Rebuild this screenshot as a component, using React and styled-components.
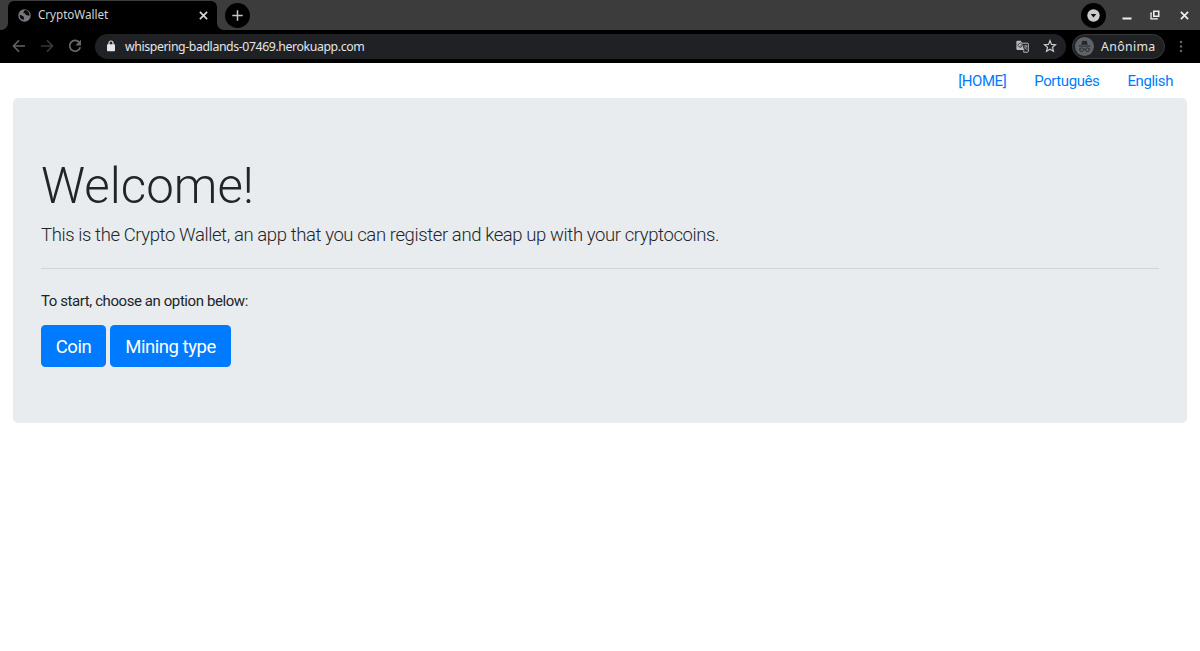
import React from "react";
import styled, { createGlobalStyle } from "styled-components";

const GlobalStyle = createGlobalStyle`
  *, *::before, *::after { box-sizing: border-box; }
  body {
    margin: 0;
    background: #fff;
    color: #212529;
    font: 400 15px/1.5 Roboto, "Liberation Sans", sans-serif;
    letter-spacing: -0.42px;
  }
`;

const Window = styled.div`
  display: flex;
  flex-direction: column;
  height: 651px;
  overflow: hidden;
`;

const TabStrip = styled.div`
  display: flex;
  align-items: stretch;
  height: 30px;
  background: #3c3c3c;
  font-family: "Noto Sans", sans-serif;
`;

const StripCorner = styled.div`
  width: 8px;
  background: #000;
  &::after {
    content: "";
    display: block;
    height: 100%;
    background: #3c3c3c;
    border-radius: ${(p) => (p.$right ? "0 0 0 7px" : "0 0 7px 0")};
  }
`;

const Tab = styled.div`
  display: flex;
  align-items: center;
  width: 209px;
  margin-top: 1px;
  padding: 0 9px 1px 10px;
  background: #000;
  border-radius: 6px 6px 0 0;
`;

const TabTitle = styled.span`
  flex: 1;
  margin-left: 7px;
  color: #d3d4d6;
  font-size: 11.7px;
  line-height: 26px;
  letter-spacing: -0.05px;
  padding-bottom: 2px;
`;

const RoundButton = styled.div`
  display: grid;
  place-items: center;
  width: 25px;
  height: 25px;
  border-radius: 50%;
  background: #000;
  align-self: center;
`;

const WindowControls = styled.div`
  display: flex;
  align-items: center;
  margin-left: auto;
  padding-right: 8px;
`;

const ControlGlyph = styled.div`
  display: grid;
  place-items: center;
  width: 16px;
  margin-left: ${(p) => p.$gap}px;
`;

const Toolbar = styled.div`
  display: flex;
  align-items: center;
  height: 33px;
  padding: 0 11px 1px 11px;
  background: #000;
  color: #e4e5e7;
  font-family: "Noto Sans", sans-serif;
`;

const NavIcons = styled.div`
  display: flex;
  gap: 12px;
  width: 84px;
`;

const AddressBar = styled.div`
  display: flex;
  align-items: center;
  flex: 1;
  height: 25px;
  padding: 0 9px 0 11px;
  border-radius: 13px;
  background: #202124;
`;

const Url = styled.span`
  flex: 1;
  margin-left: 9px;
  font-size: 12.3px;
  letter-spacing: -0.4px;
  line-height: 25px;
`;

const AddressIcons = styled.div`
  display: flex;
  align-items: center;
  gap: 14px;
`;

const Profile = styled.div`
  display: flex;
  align-items: center;
  width: 93px;
  height: 25px;
  margin: 0 8px 0 6px;
  padding-left: 2px;
  border: 1px solid #37393c;
  border-radius: 13px;
  background: #202124;
`;

const ProfileName = styled.span`
  margin-left: 7px;
  font-size: 12.3px;
  line-height: 23px;
  letter-spacing: 0.35px;
  white-space: nowrap;
`;

const Page = styled.div`
  flex: 1;
  padding: 0 13px;
`;

const SiteNav = styled.nav`
  display: flex;
  justify-content: flex-end;
  align-items: center;
  gap: 28px;
  height: 35px;
  padding: 2px 14px 0 0;
`;

const NavLink = styled.a`
  color: #007bff;
  text-decoration: none;
  line-height: 21px;
`;

const Jumbotron = styled.section`
  height: 325px;
  padding: 57px 28px 56px;
  border-radius: 5px;
  background: #e9ecef;
`;

const Heading = styled.h1`
  margin: 0 0 3px;
  font-size: 49.2px;
  font-weight: 300;
  line-height: 63px;
  letter-spacing: 0;
`;

const Lead = styled.p`
  margin: 0;
  padding-top: 1px;
  font-size: 18.5px;
  font-weight: 300;
  line-height: 26.4px;
  letter-spacing: -0.4px;
`;

const Divider = styled.hr`
  margin: 20px 0 21px;
  border: 0;
  border-top: 1px solid #d1d4d7;
`;

const Prompt = styled.p`
  margin: 0 0 12px;
  line-height: 23px;
`;

const Actions = styled.div`
  display: flex;
  gap: 4px;
`;

const Button = styled.button`
  width: ${(p) => p.$width}px;
  height: 42px;
  padding: 2px 0 0;
  border: 0;
  border-radius: 4.5px;
  background: #007bff;
  color: #fff;
  font: 400 18.5px/40px Roboto, sans-serif;
  letter-spacing: -0.45px;
`;

const Globe = () => (
  <svg width="13" height="13" viewBox="0 0 24 24">
    <circle cx="12" cy="12" r="11.5" fill="#75797d" />
    <path d="M3 11c3 0 5 1 7 3 2 1 0 3 1 6-5 0-8-4-8-9zM11 3c1 2-2 2-1 4s3 0 4 3c1 2 4 1 7 3 1-5-2-10-7-11z" fill="#0b0b0b" />
  </svg>
);

const Close = ({ size, color }) => (
  <svg width={size} height={size} viewBox="0 0 10 10" stroke={color} strokeWidth="1.9">
    <path d="M1 1l8 8M9 1L1 9" />
  </svg>
);

const Arrow = ({ forward }) => (
  <svg width="16" height="16" viewBox="0 0 16 16" fill="none" stroke={forward ? "#38393b" : "#606368"} strokeWidth="1.5">
    <path d={forward ? "M2 8h11M8 2.4L13.6 8 8 13.6" : "M14 8H3M8 2.4L2.4 8 8 13.6"} />
  </svg>
);

const Reload = () => (
  <svg width="16" height="16" viewBox="0 0 16 16">
    <path d="M12.3 4.4A5.4 5.4 0 1 0 13.3 9.3" fill="none" stroke="#66696e" strokeWidth="1.7" />
    <path d="M14 1.8v5.6H8.4z" fill="#66696e" />
  </svg>
);

const Lock = () => (
  <svg width="10" height="12" viewBox="0 0 10 12">
    <rect x="1" y="4.3" width="8" height="6.9" rx=".8" fill="#e4e5e7" />
    <path d="M3 5V3a2 2 0 0 1 4 0v2" fill="none" stroke="#e4e5e7" strokeWidth="1.2" />
  </svg>
);

const Translate = () => (
  <svg width="13" height="13" viewBox="0 0 13 13" fill="none">
    <path d="M5 3.2h6.6q.7 0 .7.7v7.6q0 .7-.7.7H7.5" stroke="#b9bbbe" />
    <path d="M1.2.7H5l3.1 9.2H1.2a.8.8 0 0 1-.8-.8V1.5q0-.8.8-.8z" fill="#b9bbbe" />
    <path d="M5.8 4.2a2 2 0 1 0 .2 1.6H4.4" stroke="#34363a" strokeWidth=".9" />
    <path d="M7.5 6H11.5M9.6 5v1M10.8 6c-.3 1.5-1.3 2.4-2.3 3.2M8.5 7l2.6 2.8M8 10l-.6 2" stroke="#b9bbbe" strokeWidth=".8" />
  </svg>
);

const Star = () => (
  <svg width="14" height="14" viewBox="0 0 24 24" fill="none" stroke="#c8cacc" strokeWidth="2.1" strokeLinejoin="miter">
    <path d="M12 2.8l2.6 6.4 6.9.6-5.2 4.5 1.6 6.8-5.9-3.6-5.9 3.6 1.6-6.8-5.2-4.5 6.9-.6z" />
  </svg>
);

const Incognito = () => (
  <svg width="19" height="19" viewBox="0 0 19 19" fill="none">
    <circle cx="9.5" cy="9.5" r="9.5" fill="#5f6368" />
    <path d="M6.2 7.8l1-3.7q.2-.5.8-.4l1.5.4 1.5-.4q.6-.1.8.4l1 3.7z" fill="#25272a" />
    <path d="M3.6 9.1h11.8" stroke="#25272a" strokeWidth="1" />
    <circle cx="6.7" cy="12.7" r="1.8" stroke="#25272a" strokeWidth=".9" />
    <circle cx="12.3" cy="12.7" r="1.8" stroke="#25272a" strokeWidth=".9" />
    <path d="M4 12.1h1M8.5 12.4q1-.6 2 0M14 12.1h1" stroke="#25272a" strokeWidth=".9" />
  </svg>
);

export default function App() {
  return (
    <Window>
      <GlobalStyle />
      <TabStrip>
        <StripCorner />
        <Tab>
          <Globe />
          <TabTitle>CryptoWallet</TabTitle>
          <Close size={9} color="#d5d6d8" />
        </Tab>
        <StripCorner $right />
        <RoundButton>
          <svg width="11" height="11" viewBox="0 0 11 11" stroke="#c5c6c8" strokeWidth="1.5">
            <path d="M5.5.3v10.4M.3 5.5h10.4" />
          </svg>
        </RoundButton>
        <WindowControls>
          <RoundButton>
            <svg width="13" height="13" viewBox="0 0 13 13">
              <circle cx="6.5" cy="6.5" r="6.2" fill="#c9cbce" />
              <path d="M3.7 5h5.6L6.5 8.6z" fill="#08090a" />
            </svg>
          </RoundButton>
          <ControlGlyph $gap={13}>
            <svg width="10" height="10" viewBox="0 0 10 10"><path d="M.5 8.5h9" stroke="#eee" strokeWidth="2" /></svg>
          </ControlGlyph>
          <ControlGlyph $gap={12}>
            <svg width="10" height="10" viewBox="0 0 10 10" fill="none" stroke="#eee">
              <path d="M3.8 1.3h4.9v4.9H3.8z" strokeWidth="1.6" />
              <path d="M2 3.2H1v5.7h6V8" strokeWidth="1.3" />
            </svg>
          </ControlGlyph>
          <ControlGlyph $gap={13}><Close size={9} color="#eee" /></ControlGlyph>
        </WindowControls>
      </TabStrip>
      <Toolbar>
        <NavIcons><Arrow /><Arrow forward /><Reload /></NavIcons>
        <AddressBar>
          <Lock />
          <Url>whispering-badlands-07469.herokuapp.com</Url>
          <AddressIcons><Translate /><Star /></AddressIcons>
        </AddressBar>
        <Profile>
          <Incognito />
          <ProfileName>Anônima</ProfileName>
        </Profile>
        <ControlGlyph $gap={0}>
          <svg width="4" height="13" viewBox="0 0 4 13" fill="#66696d">
            <circle cx="2" cy="2" r="1.2" /><circle cx="2" cy="6.5" r="1.2" /><circle cx="2" cy="11" r="1.2" />
          </svg>
        </ControlGlyph>
      </Toolbar>
      <Page>
        <SiteNav>
          <NavLink>[HOME]</NavLink>
          <NavLink>Português</NavLink>
          <NavLink>English</NavLink>
        </SiteNav>
        <Jumbotron>
          <Heading>Welcome!</Heading>
          <Lead>This is the Crypto Wallet, an app that you can register and keap up with your cryptocoins.</Lead>
          <Divider />
          <Prompt>To start, choose an option below:</Prompt>
          <Actions>
            <Button $width={65}>Coin</Button>
            <Button $width={121}>Mining type</Button>
          </Actions>
        </Jumbotron>
      </Page>
    </Window>
  );
}
